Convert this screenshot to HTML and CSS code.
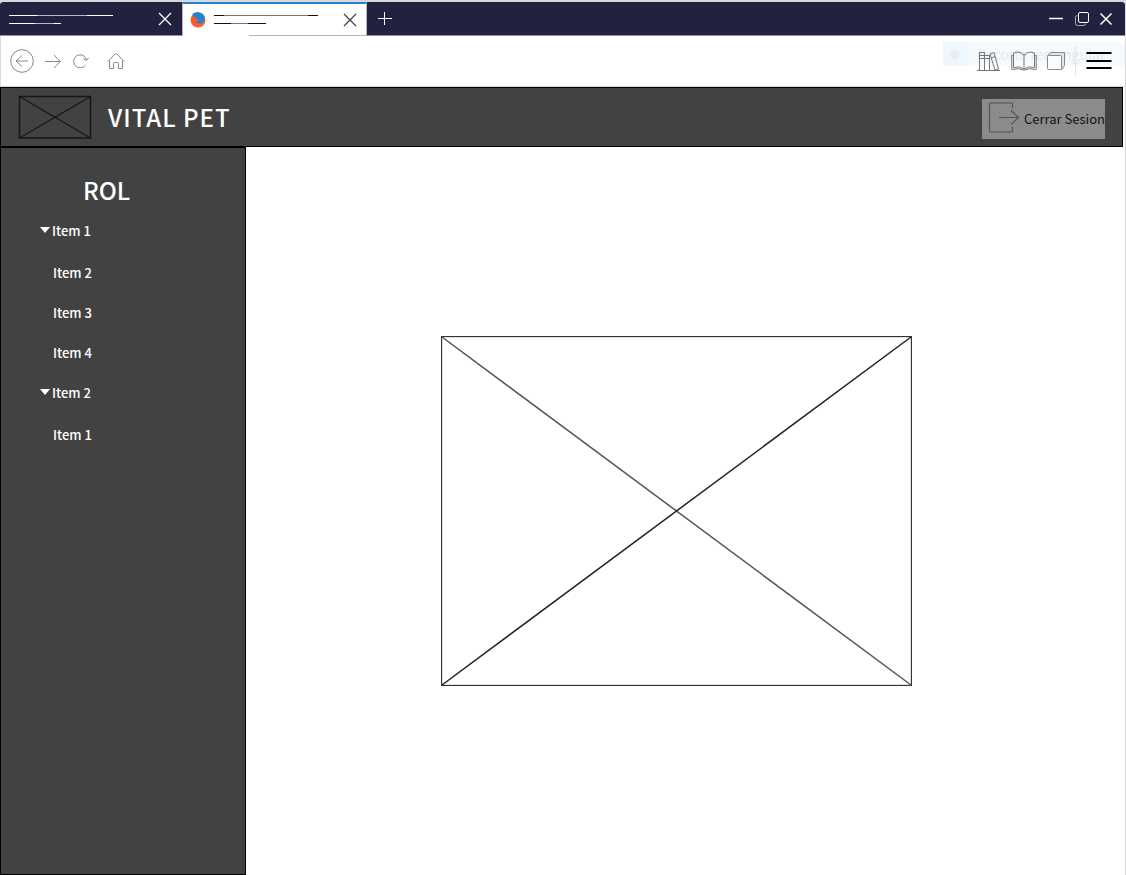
FILE: index.html
```html
<!DOCTYPE html>
<html lang="es">
<head>
<meta charset="utf-8">
<title>Vital Pet</title>
<link rel="stylesheet" href="styles.css">
</head>
<body>
<div class="window">
  <div class="tabs">
    <div class="tab">
      <svg class="lines" width="105" height="13" viewBox="0 0 105 13"><path d="M0 3.500H28M78 3.500H104M0 11.500H26M45 11.500H52" stroke="#fff"/><path d="M28 3.500H78M26 11.500H45" stroke="#b9bac8"/></svg>
      <button class="icon-btn" aria-label="Cerrar pestaña"><svg width="14" height="14" viewBox="0 0 14 14"><path d="M1 1L13 13M13 1L1 13" stroke="#fff" stroke-width="1.300"/></svg></button>
    </div>
    <div class="tab tab-active">
      <svg class="favicon" width="16" height="16" viewBox="0 0 16 16"><circle cx="8" cy="8" r="7.500" fill="#ff5a2c"/><path d="M2.500 1.800C5 -.3 10-.5 13 2.200C15.300 4.500 15 8.500 12.500 10.800C10 12.500 6.500 11.500 5.500 9.500L8.500 9.200L9.500 8L6.500 7.300L5.500 5.200L3 4.500Z" fill="#2185d0"/></svg>
      <svg class="lines" width="105" height="14" viewBox="0 0 105 14"><path d="M0 2.500H10M94 2.500H104M0 10.500H17M34 10.500H52" stroke="#111"/><path d="M10 2.500H94M17 10.500H34" stroke="#777"/></svg>
      <button class="icon-btn" aria-label="Cerrar pestaña"><svg width="14" height="14" viewBox="0 0 14 14"><path d="M1 1L13 13M13 1L1 13" stroke="#444" stroke-width="1.300"/></svg></button>
    </div>
    <button class="icon-btn new-tab" aria-label="Nueva pestaña"><svg width="14" height="14" viewBox="0 0 14 14"><path d="M0 6.500H14M6.500 0V13" stroke="#fff"/></svg></button>
    <div class="controls">
      <button class="icon-btn" aria-label="Minimizar"><svg width="14" height="14" viewBox="0 0 14 14"><path d="M0 6.500H14" stroke="#fff" stroke-width="1.500"/></svg></button>
      <button class="icon-btn" aria-label="Restaurar"><svg width="14" height="14" viewBox="0 0 14 14" fill="none" stroke="#fff"><rect x="3.500" y=".5" width="10" height="10" rx="1.500"/><path d="M2.500 3.500Q.5 3.500.5 5.500V11.500Q.5 13.500 2.500 13.500H8.500Q10.500 13.500 10.500 11.500" stroke="#aaabba"/></svg></button>
      <button class="icon-btn" aria-label="Cerrar"><svg width="14" height="14" viewBox="0 0 14 14"><path d="M1.500 1.500L12.500 12.500M12.500 1.500L1.500 12.500" stroke="#fff" stroke-width="1.500"/></svg></button>
    </div>
  </div>

  <div class="toolbar">
    <button class="icon-btn" aria-label="Atrás"><svg width="24" height="24" viewBox="0 0 24 24" fill="none" stroke="#888"><circle cx="12" cy="12" r="11.300"/><path d="M18 12H6M12 6.500L6 12L12 17.500"/></svg></button>
    <button class="icon-btn forward" aria-label="Adelante"><svg width="16" height="14" viewBox="0 0 16 14" fill="none" stroke="#888"><path d="M0 7.500H15M9 1L15.300 7.500L9 14"/></svg></button>
    <button class="icon-btn reload" aria-label="Recargar"><svg width="16" height="14" viewBox="0 0 16 14" fill="none" stroke="#888"><path d="M12.500 11A6.500 6.500 0 1 1 13.500 6M10.500 4.500L13.500 6.500L15.500 4"/></svg></button>
    <button class="icon-btn home" aria-label="Inicio"><svg width="18" height="18" viewBox="0 0 18 18" fill="none" stroke="#888"><path d="M.8 9.500L9 1.200L17.200 9.500M2.500 8.500V16.500H6.500V11.500Q6.500 10.500 7.500 10.500H10.500Q11.500 10.500 11.500 11.500V16.500H15.500V8.500"/></svg></button>
    <div class="tools">
      <button class="icon-btn" aria-label="Biblioteca"><svg width="24" height="20" viewBox="0 0 24 20" fill="none" stroke="#777"><path d="M0 19.500H23M2.500 19V1.500H7.500V19M7.500 19V4.500H12.500V19M2.500 4.500H7.500M2.500 7.500H12.500M13 3L17 1.500L21.500 18L18 19ZM14 7L18 5.500"/></svg></button>
      <button class="icon-btn" aria-label="Lectura"><svg width="26" height="20" viewBox="0 0 26 20" fill="none" stroke="#777"><path d="M13 4V18M13 4Q8-.5 2.500 2V16.500Q8 14.500 13 18Q18 14.500 23.500 16.500V2Q18-.5 13 4M2.500 4.500H.8V18.500Q7 16.500 13 19Q19 16.500 25.200 18.500V4.500H23.500"/></svg></button>
      <button class="icon-btn" aria-label="Ventanas"><svg width="18" height="18" viewBox="0 0 18 18" stroke="#888"><path d="M.5 3.500L4 .5H17.500V13.500L15 17.500Z" fill="#e3e5e9"/><rect x=".5" y="3.500" width="14" height="14" rx="1" fill="#fafbfb"/></svg></button>
      <span class="divider"></span>
      <button class="icon-btn" aria-label="Menú"><svg width="26" height="18" viewBox="0 0 26 18"><path d="M.5 1H25.500M.5 9H25.500M.5 16H25.500" stroke="#000" stroke-width="2"/></svg></button>
      <div class="snip"><span class="snip-dot"></span>Recorte rectangular</div>
    </div>
  </div>

  <header class="header">
    <svg class="logo" width="74" height="44" viewBox="0 0 74 44" fill="none" stroke="#161616"><rect x="1.500" y="1.500" width="71" height="41.500" stroke-width="1.500"/><path d="M1.500 1.500L72.500 43M72.500 1.500L1.500 43" stroke-width="1.300"/></svg>
    <h1 class="brand">VITAL PET</h1>
    <button class="logout"><svg width="32" height="32" viewBox="0 0 32 32" fill="none" stroke="#555" stroke-width="1.200"><path d="M24.500 6V2Q24.500 1 23.500 1H2.500Q1.500 1 1.500 2V29Q1.500 30 2.500 30H23.500Q24.500 30 24.500 29V25M11 15.500H30.500M23 8.500L30.500 15.500L23 22.500"/></svg>Cerrar Sesion</button>
  </header>

  <div class="body">
    <nav class="sidebar" aria-label="Menú principal">
      <h2 class="role">ROL</h2>
      <ul class="menu">
        <li><a href="#"><span class="caret"></span>Item 1</a>
          <ul class="submenu">
            <li><a href="#">Item 2</a></li>
            <li><a href="#">Item 3</a></li>
            <li><a href="#">Item 4</a></li>
          </ul>
        </li>
        <li><a href="#"><span class="caret"></span>Item 2</a>
          <ul class="submenu">
            <li><a href="#">Item 1</a></li>
          </ul>
        </li>
      </ul>
    </nav>
    <main class="content">
      <svg class="placeholder" viewBox="0 0 471 350" fill="none"><rect x=".5" y=".5" width="470" height="349" stroke="#333" stroke-width="1.300"/><path d="M1 1L470 349" stroke="#555" stroke-width="1.500"/><path d="M470 1L1 349" stroke="#222" stroke-width="1.500"/></svg>
    </main>
  </div>
</div>
</body>
</html>
```

FILE: styles.css
```css
* { box-sizing: border-box; }

body {
  margin: 0;
  background: #fff;
  font-family: "Noto Sans CJK SC", "Noto Sans", sans-serif;
}

h1, h2, ul { margin: 0; padding: 0; font-weight: 500; }
ul { list-style: none; }
svg { display: block; flex: none; }
a { color: inherit; text-decoration: none; }

.window {
  display: flex;
  flex-direction: column;
  min-height: 100vh;
  border-top: 2px solid #d8d8dc;
  border-right: 1px solid #d8d8d8;
}

.icon-btn {
  display: flex;
  padding: 0;
  border: 0;
  background: none;
}

.tabs {
  display: flex;
  height: 34px;
  background: #20223f;
  border-bottom: 1px solid #8f90a0;
  border-radius: 3px 3px 0 0;
}

.tab {
  display: flex;
  align-items: center;
  width: 182px;
  padding: 0 10px 0 9px;
}

.tab .icon-btn { margin-left: auto; }

.tab-active {
  width: 185px;
  height: 34px;
  padding-right: 9px;
  padding-left: 7px;
  background: linear-gradient(90deg, #fff 36%, #b5b6c0 36%) bottom / 100% 1px no-repeat #fff;
  border-top: 2px solid #2185d0;
  border-right: 1px solid #b5b6c0;
  border-left: 1px solid #b5b6c0;
}

.favicon { margin-right: 8px; }

.new-tab { align-items: center; margin-left: 11px; }

.controls {
  display: flex;
  align-items: center;
  gap: 12px;
  margin-left: auto;
  padding-right: 12px;
}

.controls .icon-btn + .icon-btn + .icon-btn { margin-left: -2px; }

.toolbar {
  display: flex;
  align-items: center;
  height: 51px;
  padding: 0 13px 0 9px;
  border-bottom: 1px solid #d4d4d4;
  border-left: 1px solid #dcdcdc;
}

.forward { margin-left: 11px; }
.reload { margin-left: 12px; }
.home { margin-left: 18px; }

.tools {
  position: relative;
  display: flex;
  align-items: center;
  gap: 10px;
  margin-left: auto;
}

.divider {
  width: 1px;
  height: 30px;
  background: #e2e4e6;
}

.snip {
  position: absolute;
  top: -4px;
  right: -13px;
  z-index: -1;
  display: flex;
  align-items: center;
  gap: 18px;
  width: 182px;
  height: 24px;
  padding-left: 7px;
  background: linear-gradient(90deg, #eff7fe 24px, #f6fafd 26px);
  color: #e3e9ed;
  font-size: 14px;
  line-height: 24px;
  white-space: nowrap;
}

.snip-dot {
  width: 9px;
  height: 9px;
  border-radius: 50%;
  background: #e9edf0;
}

.header {
  display: flex;
  align-items: center;
  height: 60px;
  margin-right: 2px;
  padding: 0 17px;
  background: #424242;
  border: 1px solid #000;
  color: #fff;
}

.brand {
  margin-left: 16px;
  font-size: 24px;
  line-height: 36px;
  letter-spacing: 1px;
}

.logout {
  display: flex;
  align-items: center;
  gap: 4px;
  height: 40px;
  margin-left: auto;
  margin-top: 4px;
  padding: 0 0 2px 6px;
  border: 0;
  background: #8b8b8b;
  color: #111;
  font: inherit;
  font-size: 13px;
}

.body { display: flex; flex: 1; }

.sidebar {
  width: 246px;
  padding: 24px 0 0 39px;
  background: #424242;
  border: 1px solid #000;
  color: #fff;
}

.role {
  padding-left: 43px;
  font-size: 24px;
  line-height: 36px;
}

.menu {
  padding-top: 2px;
  font-size: 13px;
}

.menu a {
  display: flex;
  align-items: center;
  height: 40px;
}

.submenu {
  padding-top: 2px;
  padding-left: 13px;
}

.menu .submenu { font-size: 13px; }

.caret {
  margin-right: 2px;
  border: 5px solid transparent;
  border-top: 6px solid #fff;
  border-bottom: 0;
}

.content {
  display: flex;
  flex: 1;
  align-items: center;
  justify-content: center;
  padding-right: 18px;
}

.placeholder {
  width: 100%;
  max-width: 471px;
}
```
